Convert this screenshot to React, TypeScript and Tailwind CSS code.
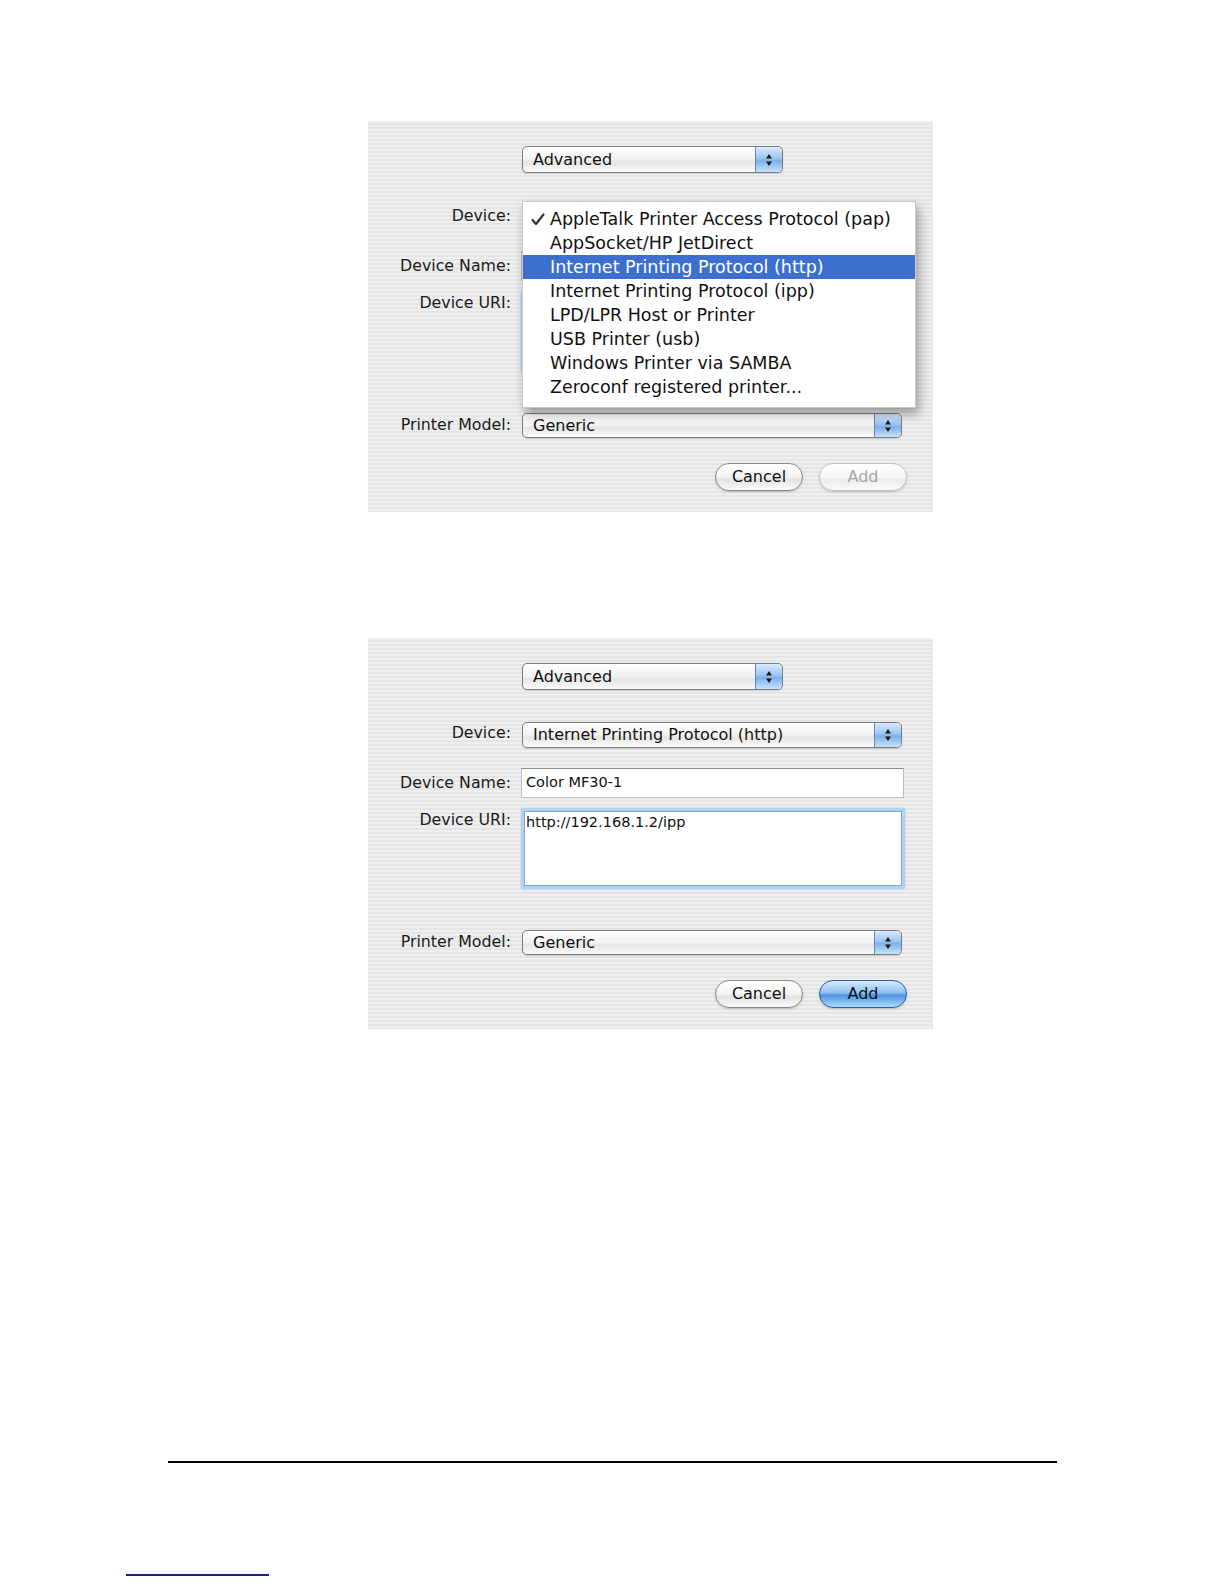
import React from "react";

const FONT = "font-['DejaVu_Sans','Liberation_Sans',sans-serif]";

const DEVICES = [
  "AppleTalk Printer Access Protocol (pap)",
  "AppSocket/HP JetDirect",
  "Internet Printing Protocol (http)",
  "Internet Printing Protocol (ipp)",
  "LPD/LPR Host or Printer",
  "USB Printer (usb)",
  "Windows Printer via SAMBA",
  "Zeroconf registered printer...",
];

function Stepper() {
  return (
    <span className="flex h-full w-[27px] shrink-0 items-center justify-center rounded-r-[5px] border-l border-[#5f86b8] bg-[linear-gradient(180deg,#d8eafd_0%,#9cc6f3_45%,#7db0ea_55%,#c4e3fc_100%)]">
      <svg width="8" height="14" viewBox="0 0 8 14">
        <path d="M4 1 L7 5.5 L1 5.5 Z" fill="#1a1a1a" />
        <path d="M4 13 L7 8.5 L1 8.5 Z" fill="#1a1a1a" />
      </svg>
    </span>
  );
}

function Popup({ value, width, height }: { value: string; width: string; height: string }) {
  return (
    <div
      className={`flex ${width} ${height} items-stretch overflow-hidden rounded-[5px] border border-[#7d7d7d] bg-[linear-gradient(180deg,#ffffff_0%,#f1f1f1_50%,#e4e4e4_60%,#fbfbfb_100%)] shadow-[0_1px_1px_rgba(0,0,0,0.15)]`}
    >
      <span className="flex flex-1 items-center pl-[10px] text-[16px] text-[#111]">{value}</span>
      <Stepper />
    </div>
  );
}

function PushButton({ label, kind }: { label: string; kind: "normal" | "disabled" | "default" }) {
  const look =
    kind === "default"
      ? "border-[#2d5f9e] bg-[linear-gradient(180deg,#d6ebff_0%,#8fc0f2_45%,#4f94e3_55%,#a9dbff_100%)] text-[#111]"
      : kind === "disabled"
        ? "border-[#c4c4c4] bg-[linear-gradient(180deg,#ffffff_0%,#f6f6f6_50%,#ececec_60%,#fafafa_100%)] text-[#a6a6a6]"
        : "border-[#8a8a8a] bg-[linear-gradient(180deg,#ffffff_0%,#f3f3f3_50%,#e2e2e2_60%,#fbfbfb_100%)] text-[#111]";
  return (
    <div
      className={`flex h-[28px] w-[88px] items-center justify-center rounded-full border text-[16px] shadow-[0_1px_2px_rgba(0,0,0,0.2)] ${look}`}
    >
      {label}
    </div>
  );
}

function Label({ children, className = "" }: { children: React.ReactNode; className?: string }) {
  return <span className={`text-right text-[15.8px] text-[#1b1b1b] ${className}`}>{children}</span>;
}

function Dialog({ menuOpen }: { menuOpen: boolean }) {
  return (
    <div
      className={`relative h-[391px] w-[565px] pt-[25px] bg-[image:repeating-linear-gradient(180deg,#efefef_0px,#efefef_2px,#e5e5e5_2px,#e5e5e5_4px)] ${FONT}`}
    >
      <div className="grid grid-cols-[143px_380px] gap-x-[11px]">
        {/* Advanced */}
        <span />
        <Popup value="Advanced" width="w-[261px]" height="h-[27px]" />

        {/* Device */}
        <Label className="mt-[32px] leading-[22px]">Device:</Label>
        <div className="mt-[32px]">
          <Popup value="Internet Printing Protocol (http)" width="w-[380px]" height="h-[26px]" />
        </div>

        {/* Device Name */}
        <Label className="mt-[20px] leading-[30px]">Device Name:</Label>
        <div className="-ml-[1px] mt-[20px] flex h-[30px] w-[383px] items-center border border-[#bdbdbd] border-t-[#8c8c8c] bg-white pl-[4px] text-[14.5px] text-[#111]">
          Color MF30-1
        </div>

        {/* Device URI */}
        <Label className="mt-[10px] leading-[24px]">Device URI:</Label>
        <div className="-ml-[1px] mt-[10px] h-[81px] w-[384px] rounded-[2px] border-[3px] border-[#b3d1f1] bg-white pl-[2px] pt-[1px] text-[14.5px] text-[#111] shadow-[inset_0_0_0_1px_#7aa8dc,0_0_2px_#9cc2ea]">
          http://192.168.1.2/ipp
        </div>

        {/* Printer Model */}
        <Label className="mt-[41px] leading-[23px]">Printer Model:</Label>
        <div className="mt-[41px]">
          <Popup value="Generic" width="w-[380px]" height="h-[25px]" />
        </div>
      </div>

      <div className="mt-[25px] flex justify-end gap-[16px] pr-[26px]">
        <PushButton label="Cancel" kind="normal" />
        <PushButton label="Add" kind={menuOpen ? "disabled" : "default"} />
      </div>

      {menuOpen && (
        <div className="absolute left-[154px] top-[80px] w-[394px] border border-[#c9c9c9] bg-white pb-[8px] pt-[5px] shadow-[3px_6px_10px_rgba(0,0,0,0.35)]">
          {DEVICES.map((d, i) => (
            <div
              key={d}
              className={`relative flex h-[24px] items-center pl-[27px] text-[17.5px] ${
                i === 2 ? "bg-[#3d6fd1] text-white" : "text-[#111]"
              }`}
            >
              {i === 0 && (
                <svg className="absolute left-[8px] top-[6px]" width="14" height="13" viewBox="0 0 14 13">
                  <path d="M1.5 7 L5 11 L12.5 1.5" fill="none" stroke="#333" strokeWidth="2.2" strokeLinecap="round" strokeLinejoin="round" />
                </svg>
              )}
              {d}
            </div>
          ))}
        </div>
      )}
    </div>
  );
}

export default function App() {
  return (
    <div className="relative min-h-[1584px] w-[1224px] bg-white">
      <div className="ml-[368px] pt-[121px]">
        <Dialog menuOpen={true} />
      </div>
      <div className="ml-[368px] mt-[126px]">
        <Dialog menuOpen={false} />
      </div>
      <div className="ml-[168px] mt-[432px] h-[2px] w-[889px] bg-black" />
      <div className="ml-[126px] mt-[111px] h-[2px] w-[143px] bg-[#1c1c8a]" />
    </div>
  );
}
